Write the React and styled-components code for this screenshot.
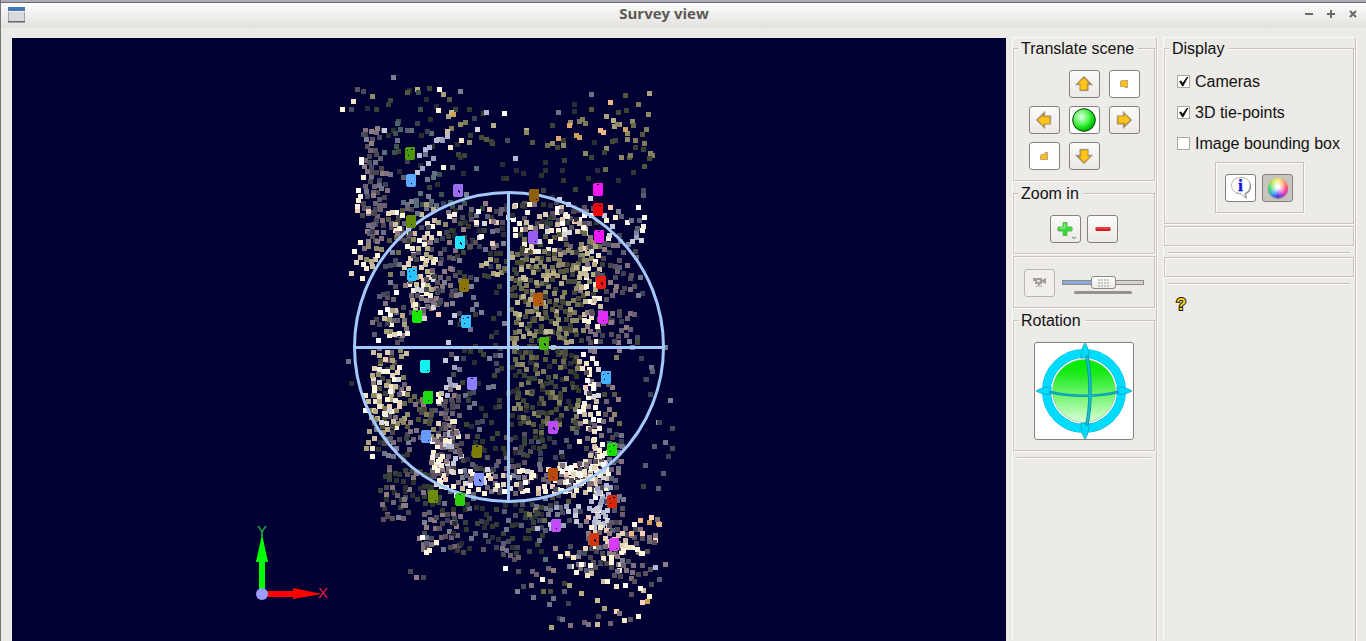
import { useState } from "react";
import styled, { createGlobalStyle, css } from "styled-components";

const GlobalStyle = createGlobalStyle`
  *,
  *::before,
  *::after {
    box-sizing: border-box;
  }

  body {
    margin: 0;
    background: #edebe7;
    color: #111;
    font-family: "Liberation Sans", Arial, sans-serif;
    font-size: 16px;
    line-height: 20px;
  }
`;

const etched = css`
  border: 1px solid #c6c3bc;
  box-shadow: 1px 1px 0 #fbfaf8, inset 1px 1px 0 #fbfaf8;
`;

const Window = styled.div`
  display: flex;
  flex-direction: column;
  height: 100vh;
  min-height: 480px;
  overflow: hidden;
  border-left: 1px solid #77757a;
`;

const TitleBar = styled.header`
  display: flex;
  align-items: center;
  height: 28px;
  padding: 0 7px;
  border-top: 2px solid #a9abb9;
  box-shadow: inset 0 1px 0 #6d6b70;
  background: linear-gradient(#fdfdfd, #e2e1de);
`;

const Title = styled.h1`
  flex: 1;
  margin: 0;
  padding-bottom: 4px;
  text-align: center;
  font-family: "Open Sans", "Noto Sans", sans-serif;
  font-size: 15px;
  font-weight: 700;
  line-height: 20px;
  color: #5b5956;
`;

const WindowButtons = styled.div`
  display: flex;
  justify-content: flex-end;
  gap: 10px;
  padding-bottom: 2px;
`;

const WindowButton = styled.button`
  display: grid;
  place-items: center;
  width: 12px;
  height: 20px;
  padding: 0;
  border: 0;
  background: none;
`;

const Main = styled.main`
  flex: 1;
  min-height: 0;
  display: grid;
  grid-template-columns: minmax(0, 1fr) 144px 192px;
  gap: 7px;
  padding: 10px 10px 0 11px;
`;

const Scene = styled.svg`
  display: block;
  width: 100%;
  height: 100%;
  background: #000033;
`;

const Column = styled.section`
  display: flex;
  flex-direction: column;
  gap: 2px;
  padding-right: 1px;
  border-right: 1px solid #c6c3bc;
  box-shadow: 1px 0 0 #fbfaf8, -1px -1px 0 #fbfaf8;
`;

const Group = styled.fieldset`
  ${etched}
  min-width: 0;
  margin: 0;
  padding: ${(props) => props.$padding || "12px 10px 10px"};
`;

const Legend = styled.legend`
  height: 20px;
  margin-left: -6px;
  padding: 0 4px 0 3px;
  background: #edebe7;
  line-height: 22px;
`;

const Frame = styled.div`
  ${etched}
  display: flex;
  align-items: center;
  gap: 7px;
  padding: 12px 10px 10px;
`;

const EmptyFrame = styled.div`
  ${etched}
  height: 20px;
`;

const Separator = styled.hr`
  width: calc(100% - 8px);
  height: 2px;
  margin: 4px auto 1px;
  border: 0;
  border-top: 1px solid #c6c3bc;
  border-bottom: 1px solid #fbfaf8;
`;

const Pad = styled.div`
  display: grid;
  grid-template-columns: repeat(3, 31px);
  grid-template-rows: repeat(3, 28px);
  gap: 8px 9px;
  justify-content: center;
`;

const ButtonRow = styled.div`
  display: flex;
  justify-content: center;
  gap: 6px;
`;

const ToolButton = styled.button`
  display: grid;
  place-items: center;
  flex: none;
  width: 31px;
  height: 28px;
  padding: 0;
  border: 1px solid #85827e;
  border-radius: 3px;
  background: ${(props) =>
    props.$pressed
      ? "#c8c5bf"
      : props.$plain
        ? "#fff"
        : "linear-gradient(#fbfbfa, #ebe9e5)"};

  &:disabled {
    border-color: #bab7b1;
    background: #f1efec;
  }
`;

const RotationButton = styled(ToolButton)`
  width: 100px;
  height: 98px;
  background: #fff;
`;

const SliderBox = styled.div`
  flex: 1;
  max-width: 82px;
  display: flex;
  flex-direction: column;
  align-items: center;
  gap: 2px;
  padding-top: 4px;
`;

const Slider = styled.input`
  appearance: none;
  width: 100%;
  height: 13px;
  margin: 0;
  background: none;

  &::-webkit-slider-runnable-track {
    height: 5px;
    border: 1px solid #8d8a86;
    background: linear-gradient(
      90deg,
      #86abd9 ${(props) => props.value}%,
      #d6d3cd ${(props) => props.value}%
    );
  }

  &::-webkit-slider-thumb {
    appearance: none;
    width: 25px;
    height: 13px;
    margin-top: -5px;
    border: 1px solid #8d8a86;
    border-radius: 3px;
    background:
      radial-gradient(circle at 1px 1px, #c9c6c1 1px, transparent 1px) 6px 1px /
        3px 3px content-box,
      linear-gradient(#fff, #ecebe8);
    background-clip: content-box, border-box;
    padding: 1px 6px;
  }
`;

const SliderRange = styled.div`
  width: 58px;
  height: 3px;
  border-radius: 2px;
  background: #96918c;
`;

const CheckRow = styled.label`
  display: flex;
  align-items: center;
  gap: 5px;
  height: 31px;
  padding-left: 2px;
  white-space: nowrap;
`;

const Checkbox = styled.input`
  appearance: none;
  flex: none;
  width: 13px;
  height: 13px;
  margin: 0;
  border: 1px solid #aba8a2;
  background: #fff;

  &:checked::after {
    content: "";
    display: block;
    width: 11px;
    height: 11px;
    background: #111;
    clip-path: polygon(
      10% 48%,
      28% 42%,
      42% 62%,
      80% 8%,
      94% 10%,
      48% 94%,
      38% 94%
    );
  }
`;

const ModeFrame = styled.div`
  ${etched}
  width: 89px;
  margin: 3px auto 0;
  padding: 11px 0 10px;
`;

const ColorWheel = styled.span`
  width: 20px;
  height: 20px;
  border-radius: 50%;
  background:
    radial-gradient(circle at 50% 45%, #fff 8%, transparent 62%),
    conic-gradient(
      #ffe45c,
      #ff8a4a,
      #ff3f6a,
      #e02bd0,
      #4a35e0,
      #28a8f0,
      #35d95a,
      #a8e43c,
      #ffe45c
    );
  box-shadow: 0 1px 1px #77757a;
`;

const HelpButton = styled.button`
  align-self: flex-start;
  margin: 5px 0 0 8px;
  padding: 0 4px;
  border: 0;
  background: none;
  color: #f0cf1c;
  font: 700 17px/24px "Liberation Sans", Arial, sans-serif;
  -webkit-text-stroke: 2px #16130a;
  paint-order: stroke fill;
`;

// tones of the tie-points
const TONES = {
  dark: ["#2b3032", "#34382f", "#3d4438", "#2a2d38", "#33423a"],
  olive: ["#56563f", "#6a6a4c", "#7f7b5b", "#474a38", "#8e8967", "#3d4238"],
  sand: ["#a8a17b", "#c4bd95", "#8e8967", "#b9ad84"],
  slate: ["#5a5d70", "#6d7287", "#474b5c", "#7c7f90", "#3b4152"],
  mauve: ["#6d6070", "#80717c", "#5a4f5c", "#8f7b80", "#4b4550"],
  cream: ["#f3e6c6", "#fff4d6", "#e2d3b8", "#fffbe9", "#cdbda3"],
  bright: ["#ffffff", "#f7efe0", "#d6d6d8", "#eec9b5", "#fff1d2"],
  lavender: ["#9c9fba", "#b3b8d3", "#c6c9d8"],
  peach: ["#f0b78c", "#e0a46c", "#ffd0b8", "#cf9f5c"],
  teal: ["#49616a", "#3c5350", "#577077"],
};

// x0, y0, x1, y1, count, tones
const CLUSTERS = [
  [364, 128, 384, 245, 76, "mauve slate mauve"],
  [358, 158, 370, 216, 8, "bright"],
  [383, 130, 438, 185, 22, "dark teal slate"],
  [398, 196, 465, 206, 18, "slate teal"],
  [389, 210, 412, 240, 34, "cream olive mauve"],
  [412, 205, 445, 240, 18, "slate sand cream"],
  [447, 205, 505, 248, 60, "bright mauve slate dark"],
  [350, 240, 376, 272, 14, "sand cream"],
  [384, 244, 405, 285, 11, "slate olive"],
  [408, 240, 433, 298, 48, "cream sand mauve bright"],
  [412, 278, 438, 316, 30, "mauve mauve bright"],
  [436, 240, 456, 308, 30, "mauve slate"],
  [456, 245, 505, 345, 34, "dark slate"],
  [480, 258, 503, 275, 12, "sand olive"],
  [374, 288, 405, 345, 32, "slate mauve bright"],
  [387, 310, 405, 335, 10, "cream sand"],
  [448, 310, 453, 400, 15, "lavender mauve"],
  [512, 200, 594, 228, 62, "cream mauve bright dark"],
  [512, 225, 588, 252, 52, "bright cream mauve olive"],
  [511, 248, 580, 345, 190, "olive olive sand"],
  [511, 348, 577, 428, 130, "olive olive dark"],
  [580, 240, 600, 300, 40, "cream sand olive mauve"],
  [584, 292, 600, 345, 20, "cream mauve"],
  [581, 350, 597, 430, 44, "cream bright cream mauve"],
  [583, 425, 600, 475, 30, "cream bright cream mauve"],
  [602, 240, 636, 345, 56, "mauve slate mauve"],
  [605, 208, 643, 250, 22, "bright lavender slate"],
  [602, 345, 622, 430, 14, "mauve olive"],
  [371, 348, 406, 432, 74, "sand mauve olive cream"],
  [378, 360, 400, 425, 20, "cream bright"],
  [366, 395, 378, 462, 10, "sand cream"],
  [378, 430, 408, 462, 20, "dark mauve slate"],
  [405, 395, 434, 440, 30, "olive mauve"],
  [436, 388, 456, 445, 46, "cream mauve mauve"],
  [431, 440, 448, 488, 40, "cream bright mauve"],
  [448, 430, 460, 466, 18, "mauve lavender"],
  [458, 348, 503, 436, 38, "slate dark"],
  [464, 434, 528, 468, 36, "dark mauve"],
  [452, 467, 526, 493, 58, "bright mauve slate cream"],
  [512, 432, 578, 462, 22, "dark slate"],
  [512, 467, 578, 493, 44, "cream mauve bright"],
  [556, 464, 600, 492, 44, "cream bright mauve"],
  [590, 445, 607, 488, 26, "bright cream mauve"],
  [591, 485, 608, 528, 42, "bright lavender"],
  [609, 430, 622, 528, 34, "mauve slate"],
  [380, 468, 442, 506, 46, "dark dark mauve"],
  [379, 498, 408, 518, 13, "mauve slate"],
  [418, 514, 458, 550, 36, "mauve slate mauve"],
  [438, 502, 542, 552, 76, "dark slate dark"],
  [528, 500, 590, 526, 32, "slate lavender olive"],
  [585, 522, 646, 553, 46, "mauve cream mauve"],
  [565, 548, 632, 570, 38, "mauve cream mauve slate"],
  [632, 518, 658, 550, 12, "mauve peach"],
];

// single points on the rim of the cloud
const STRAYS = {
  dark: [
    [390, 100], [388, 104], [429, 88], [426, 99], [430, 119], [367, 108],
    [376, 109], [409, 90], [436, 106], [469, 109], [463, 173], [502, 164],
    [503, 178], [506, 178], [516, 170], [523, 173], [545, 162], [545, 170],
    [541, 175], [552, 125], [574, 104], [574, 111], [637, 342], [563, 180],
    [562, 170], [588, 178], [597, 170], [618, 180], [633, 172], [457, 144],
    [458, 154], [464, 155], [460, 157], [643, 486], [645, 379], [351, 383],
    [594, 142], [543, 190], [575, 189],
  ],
  olive: [
    [407, 92], [449, 99], [455, 109], [483, 113], [465, 122], [451, 128],
    [470, 135], [469, 142], [481, 137], [486, 139], [492, 143], [491, 141],
    [532, 142], [552, 143], [547, 145], [563, 140], [563, 145], [582, 119],
    [585, 123], [579, 121], [591, 109], [606, 148], [604, 152], [585, 153],
    [591, 157], [615, 140], [612, 141], [632, 121], [633, 125], [642, 134],
    [646, 129], [635, 140], [644, 143], [635, 147], [643, 149], [650, 153],
    [652, 155], [649, 158], [644, 166], [629, 157], [630, 155], [621, 157],
    [605, 169], [627, 139], [564, 160], [625, 95], [626, 110], [557, 147],
    [638, 104], [618, 112], [564, 583], [543, 591], [550, 591],
  ],
  sand: [
    [372, 96], [417, 89], [443, 94], [448, 116], [451, 112], [460, 124],
    [493, 125], [526, 130], [526, 132], [570, 122], [606, 116], [613, 120],
    [619, 124], [614, 126], [617, 124], [648, 114], [649, 93], [627, 133],
    [581, 593], [597, 600], [569, 585], [551, 627], [604, 608],
  ],
  cream: [
    [353, 101], [342, 109], [439, 89], [438, 110], [447, 131], [461, 140],
    [450, 147], [443, 167], [591, 573], [587, 575], [576, 572], [581, 564],
    [643, 590], [640, 588], [616, 586], [603, 581], [607, 581], [641, 553],
    [649, 596], [638, 616], [597, 624], [624, 620], [625, 540], [622, 545],
    [623, 550], [630, 547], [637, 549], [426, 552], [429, 550], [436, 542],
  ],
  bright: [
    [504, 113], [477, 129], [361, 162], [422, 537], [625, 585], [362, 278],
    [610, 207], [638, 207], [644, 217], [560, 556], [505, 568], [542, 579],
  ],
  lavender: [
    [486, 112], [447, 136], [441, 139], [436, 140], [438, 139], [429, 147],
    [425, 149], [419, 155], [442, 140], [417, 172], [422, 168], [428, 163],
    [384, 130], [515, 158], [658, 422], [433, 158], [655, 567],
  ],
  peach: [
    [453, 114], [569, 125], [576, 135], [579, 137], [558, 138], [610, 102],
    [603, 132], [600, 130], [625, 129], [647, 601], [642, 602], [616, 611],
  ],
  teal: [
    [418, 92], [420, 109], [398, 121], [397, 123], [395, 133], [476, 168],
    [439, 174], [433, 177], [545, 559],
  ],
  slate: [
    [393, 77], [363, 91], [351, 109], [460, 91], [474, 118], [417, 123],
    [427, 131], [407, 130], [507, 140], [452, 167], [558, 112], [591, 94],
    [670, 400], [651, 367], [652, 371], [650, 394], [641, 358], [665, 347],
    [646, 379], [348, 361], [663, 473], [672, 428], [654, 446], [665, 442],
    [668, 456], [672, 448], [645, 465], [658, 488], [659, 422], [533, 597],
    [553, 598], [549, 604], [568, 603], [559, 618], [562, 619], [523, 586],
    [517, 591], [564, 591], [643, 190], [643, 195], [651, 584], [659, 579],
    [640, 277], [642, 293], [638, 295],
  ],
  mauve: [
    [357, 89], [410, 571], [416, 577], [423, 577], [518, 571], [532, 571],
    [536, 574], [548, 568], [553, 570], [550, 581], [531, 585], [570, 625],
    [584, 622], [588, 624], [610, 623], [630, 619], [619, 613], [598, 616],
    [631, 594], [614, 575], [620, 576], [631, 578], [638, 574], [645, 573],
    [650, 569], [665, 564], [642, 565], [623, 565], [634, 581], [510, 555],
    [514, 559], [518, 557], [463, 552], [483, 549], [502, 548], [555, 548],
  ],
};

function buildPoints() {
  let seed = 4217;
  const rand = () => {
    seed = (seed * 1103515245 + 12345) % 2147483648;
    return seed / 2147483648;
  };
  const pick = (list) => list[Math.floor(rand() * list.length)];
  const points = [];

  const isCovered = (x, y) =>
    points.some((p) => Math.abs(p.x - x) < 4 && Math.abs(p.y - y) < 4);

  // a ragged edge of a few pixels, so that neighbouring clusters blend
  const place = (from, to) =>
    Math.round(from + rand() * (to - from) + (rand() - 0.5) * 8);

  CLUSTERS.forEach(([x0, y0, x1, y1, count, tones]) => {
    const names = tones.split(" ");
    for (let i = 0; i < count; i++) {
      let x = place(x0, x1);
      let y = place(y0, y1);
      for (let tries = 0; tries < 3 && isCovered(x, y); tries++) {
        x = place(x0, x1);
        y = place(y0, y1);
      }
      points.push({ x, y, fill: pick(TONES[pick(names)]) });
    }
  });

  Object.entries(STRAYS).forEach(([tone, list]) => {
    list.forEach(([x, y]) => points.push({ x, y, fill: pick(TONES[tone]) }));
  });

  return points;
}

const POINTS = buildPoints();

const CAMERAS = [
  [410, 153, "#4c9a0c"], [411, 180, "#5ca8ff"], [458, 190, "#9a6cf0"],
  [534, 195, "#8f5f0c"], [598, 189, "#f718f0"], [598, 209, "#fa0008"],
  [411, 221, "#648c0a"], [460, 242, "#22e4ff"], [533, 237, "#9b5cf5"],
  [599, 236, "#f018f5"], [412, 274, "#22c8ff"], [464, 285, "#8a7408"],
  [601, 282, "#ee1c10"], [538, 299, "#b35a0c"], [417, 316, "#1be800"],
  [466, 321, "#35c4ff"], [603, 317, "#e22cf5"], [544, 343, "#45b50c"],
  [425, 366, "#12f0f0"], [472, 383, "#8c7cff"], [606, 377, "#45b0ff"],
  [428, 397, "#1cdc10"], [553, 427, "#b94cf5"], [426, 436, "#669aff"],
  [477, 451, "#7c7c08"], [612, 449, "#18e000"], [553, 474, "#b84a0c"],
  [479, 479, "#8296ff"], [433, 496, "#6a8c08"], [460, 499, "#2cd00c"],
  [612, 501, "#d8280c"], [556, 525, "#c04cf5"], [594, 539, "#d0380c"],
  [614, 544, "#d63cf5"],
];

const FLECKS = [
  "M-3 -3h1v1h-1zM1 -4h2v1h-2zM-2 2h1v1h-1z",
  "M0 3h1v1h-1z",
  "M0 0h1v1h1v2h-1v-1h-1z",
  "M2 4h1v1h-1z",
  "M-1 -5h2v1h-2z",
];

function SurveyScene() {
  return (
    <Scene
      viewBox="12 38 994 603"
      preserveAspectRatio="xMidYMid slice"
      role="img"
      aria-label="Survey view"
    >
      <g shapeRendering="crispEdges">
        {POINTS.map(({ x, y, fill }, i) => (
          <rect key={i} x={x - 2} y={y - 2} width="5" height="5" fill={fill} />
        ))}
      </g>
      <g fill="none" stroke="#a5c8fa" strokeWidth="3">
        <circle cx="509" cy="347" r="154.5" />
        <path d="M508.5 192v309M354 347.5h310" />
      </g>
      <g shapeRendering="crispEdges">
        {CAMERAS.map(([x, y, fill], i) => (
          <g key={i} transform={`translate(${x} ${y})`}>
            <path d="M-4 -6h9v12h-1v1h-8v-1h-1v-11h1z" fill={fill} />
            <path d={FLECKS[i % FLECKS.length]} fill="#000033" />
          </g>
        ))}
      </g>
      <path d="M259 592V562h-3l6-28 6 28h-3v30z" fill="#00ff00" />
      <path d="M266 591h27v-3l29 6-29 5v-2h-27z" fill="#ff0000" />
      <circle cx="262" cy="594" r="6" fill="#9c9cff" />
      <g
        fontFamily="Liberation Sans, Arial, sans-serif"
        fontSize="15"
        textAnchor="middle"
      >
        <text x="262" y="536" fill="#2dbb45">
          Y
        </text>
        <text x="323" y="598" fill="#e0203c">
          X
        </text>
      </g>
    </Scene>
  );
}

function ArrowIcon({ angle }) {
  return (
    <svg width="20" height="20" viewBox="-10 -10 20 20">
      <g transform={`rotate(${angle})`}>
        <path
          d="M0 -8L9 1H4.500V7H-4.500V1H-9z"
          fill="#9c8a66"
          stroke="#c9bfae"
          strokeWidth="0.600"
        />
        <path
          d="M0 -6L4.500 -1H3V5.500H-3.500V-.5H-6z"
          fill="#ffc61a"
          stroke="#eda40c"
          strokeWidth="0.800"
        />
      </g>
    </svg>
  );
}

function DepthIcon({ back }) {
  return (
    <svg width="10" height="10" viewBox="0 0 10 10">
      <path
        d={back ? "M1 5L2 3H5L6 1H9V9H1z" : "M1 2L3 1H9V9H6L5 8H1z"}
        fill="#c9a868"
      />
      <path
        d={back ? "M2 5L3 4H6L7 2L8 3V6L7 8H2z" : "M3 2H8V7L6 8L5 7H2V4z"}
        fill="#fbbd24"
      />
    </svg>
  );
}

function BallIcon() {
  return (
    <svg width="26" height="26" viewBox="0 0 26 26">
      <defs>
        <radialGradient id="ball" cx="0.38" cy="0.36" r="0.65">
          <stop offset="0" stopColor="#e2ffe2" />
          <stop offset="0.5" stopColor="#5cf55c" />
          <stop offset="0.8" stopColor="#0bdc0b" />
          <stop offset="1" stopColor="#07a807" />
        </radialGradient>
      </defs>
      <circle cx="13" cy="13" r="11.300" fill="url(#ball)" stroke="#123c12" />
    </svg>
  );
}

function PlusIcon() {
  return (
    <svg width="27" height="24" viewBox="0 0 27 24">
      <path
        d="M11 5.500h4v4.500h5v4h-5v4.500h-4v-4.500h-5v-4h5z"
        fill="#2fe02f"
        stroke="#6fae6a"
      />
      <path d="M12 7h1v4h-5" fill="none" stroke="#a4f7a0" />
      <path d="M20 20l2 1.500 2-1.500" fill="none" stroke="#77757a" />
    </svg>
  );
}

function MinusIcon() {
  return (
    <svg width="16" height="6" viewBox="0 0 16 6">
      <rect x="0.5" y="1" width="15" height="4" rx="1" fill="#dc1626" />
      <path d="M1.500 2h13" stroke="#f36b74" />
    </svg>
  );
}

function CameraIcon() {
  return (
    <svg width="16" height="14" viewBox="0 0 16 14">
      <path d="M1 2h9v6H3V5H1z" fill="#a19e99" />
      <path d="M10 4l4-2v6l-4-2" fill="#a19e99" />
      <path d="M5 4h3v2H5z" fill="#e5e3df" />
      <path d="M7 8v3M7 8l-3 3M7 8l3 3" stroke="#a19e99" fill="none" />
    </svg>
  );
}

function InfoIcon() {
  return (
    <svg width="22" height="24" viewBox="0 0 22 24">
      <path
        d="M12 3c6 0 9 3 9 7.500 0 4-2.500 6.500-5 7.500l1 5-5-4.500c-6 0-9-3.500-9-8"
        fill="#77757a"
      />
      <path
        d="M11 1.500c6 0 9 3.500 9 8 0 4-2 6.500-5 7.500v5l-4-4.500c-6 0-9.500-3.500-9.500-8s3.500-8 9.500-8z"
        fill="#fff"
        stroke="#b9b7b5"
      />
      <text
        x="10.500"
        y="15"
        fill="#1010e0"
        stroke="#1010e0"
        strokeWidth="0.600"
        fontFamily="Liberation Serif, serif"
        fontSize="16"
        fontWeight="700"
        textAnchor="middle"
      >
        i
      </text>
    </svg>
  );
}

function RotationIcon() {
  return (
    <svg width="98" height="96" viewBox="0 0 98 96">
      <defs>
        <linearGradient id="globe" x1="0" y1="0" x2="0" y2="1">
          <stop offset="0" stopColor="#00ee00" />
          <stop offset="0.2" stopColor="#16ea16" />
          <stop offset="1" stopColor="#dcffd8" />
        </linearGradient>
      </defs>
      <circle cx="49" cy="48" r="37.500" fill="#fff" stroke="#00b7de" strokeWidth="9" />
      <circle cx="49" cy="48" r="37.500" fill="none" stroke="#00dcff" strokeWidth="8" />
      <circle cx="49" cy="48" r="31.500" fill="url(#globe)" stroke="#8cc98a" strokeWidth="0.700" />
      <g fill="#00dcff" stroke="#00a3c6" strokeWidth="0.800">
        <path d="M1 48c5-3 10-4 15-4v7.500c-5 0-10-.5-15-3.500z" />
        <path d="M97 48c-5-3-10-4-15-4v7.500c5 0 10-.5 15-3.500z" />
        <path d="M50 0c3 4 4 9 4 15h-8c0-6 1-11 4-15z" />
        <path d="M50 96c3-4 4-9 4-16h-8c0 7 1 12 4 16z" />
      </g>
      <g fill="none" strokeLinecap="round">
        <path d="M15 49C34 54 64 54 83 49" stroke="#0797a5" strokeWidth="2.500" />
        <path d="M52 14C56 34 56 62 52 81" stroke="#0797a5" strokeWidth="3.500" />
        <path d="M15 49C34 54 64 54 83 49" stroke="#15b8c3" strokeWidth="1" />
        <path d="M52 14C56 34 56 62 52 81" stroke="#10c0cc" strokeWidth="1.800" />
      </g>
    </svg>
  );
}

function WindowIcon() {
  return (
    <svg width="17" height="16" viewBox="0 0 17 16">
      <rect width="17" height="16" fill="#a3a5a8" />
      <rect x="1" y="5" width="15" height="9" fill="#d9dadb" />
      <rect width="17" height="4" fill="#4477b5" />
      <rect y="4" width="17" height="1" fill="#eceef0" />
      <rect y="14" width="17" height="1" fill="#63666d" />
    </svg>
  );
}

const WINDOW_ACTIONS = [
  { label: "Minimize", path: "M1 5h8" },
  { label: "Maximize", path: "M1 5h8M5 1v8" },
  { label: "Close", path: "M2 2l6 6M8 2l-6 6" },
];

function TranslateGroup() {
  return (
    <Group>
      <Legend>Translate scene</Legend>
      <Pad>
        <span />
        <ToolButton aria-label="Up">
          <ArrowIcon angle={0} />
        </ToolButton>
        <ToolButton $plain aria-label="Forward">
          <DepthIcon />
        </ToolButton>
        <ToolButton aria-label="Left">
          <ArrowIcon angle={-90} />
        </ToolButton>
        <ToolButton $plain aria-label="Center">
          <BallIcon />
        </ToolButton>
        <ToolButton aria-label="Right">
          <ArrowIcon angle={90} />
        </ToolButton>
        <ToolButton $plain aria-label="Backward">
          <DepthIcon back />
        </ToolButton>
        <ToolButton aria-label="Down">
          <ArrowIcon angle={180} />
        </ToolButton>
      </Pad>
    </Group>
  );
}

function DisplayGroup() {
  const [shown, setShown] = useState({
    Cameras: true,
    "3D tie-points": true,
    "Image bounding box": false,
  });

  function handleToggle(name) {
    setShown((cur) => ({ ...cur, [name]: !cur[name] }));
  }

  return (
    <Group $padding="8px 10px 10px">
      <Legend>Display</Legend>
      {Object.keys(shown).map((name) => (
        <CheckRow key={name}>
          <Checkbox
            type="checkbox"
            checked={shown[name]}
            onChange={() => handleToggle(name)}
          />
          {name}
        </CheckRow>
      ))}
      <ModeFrame>
        <ButtonRow>
          <ToolButton $plain aria-label="Information">
            <InfoIcon />
          </ToolButton>
          <ToolButton $pressed aria-label="Colors" aria-pressed="true">
            <ColorWheel />
          </ToolButton>
        </ButtonRow>
      </ModeFrame>
    </Group>
  );
}

function App() {
  const [speed, setSpeed] = useState(50);

  return (
    <>
      <GlobalStyle />
      <Window>
        <TitleBar>
          <WindowIcon />
          <Title>Survey view</Title>
          <WindowButtons>
            {WINDOW_ACTIONS.map(({ label, path }) => (
              <WindowButton key={label} aria-label={label}>
                <svg width="10" height="10" viewBox="0 0 10 10">
                  <path d={path} stroke="#6b6966" strokeWidth="2" />
                </svg>
              </WindowButton>
            ))}
          </WindowButtons>
        </TitleBar>
        <Main>
          <SurveyScene />
          <Column>
            <TranslateGroup />
            <Group>
              <Legend>Zoom in</Legend>
              <ButtonRow>
                <ToolButton aria-label="Zoom in">
                  <PlusIcon />
                </ToolButton>
                <ToolButton aria-label="Zoom out">
                  <MinusIcon />
                </ToolButton>
              </ButtonRow>
            </Group>
            <Frame>
              <ToolButton disabled aria-label="Camera">
                <CameraIcon />
              </ToolButton>
              <SliderBox>
                <Slider
                  type="range"
                  aria-label="Speed"
                  value={speed}
                  onChange={(e) => setSpeed(Number(e.target.value))}
                />
                <SliderRange />
              </SliderBox>
            </Frame>
            <Group>
              <Legend>Rotation</Legend>
              <ButtonRow>
                <RotationButton aria-label="Rotate">
                  <RotationIcon />
                </RotationButton>
              </ButtonRow>
            </Group>
            <Separator />
          </Column>
          <Column>
            <DisplayGroup />
            <EmptyFrame />
            <Separator />
            <EmptyFrame />
            <Separator />
            <HelpButton aria-label="Help">?</HelpButton>
          </Column>
        </Main>
      </Window>
    </>
  );
}

export default App;
